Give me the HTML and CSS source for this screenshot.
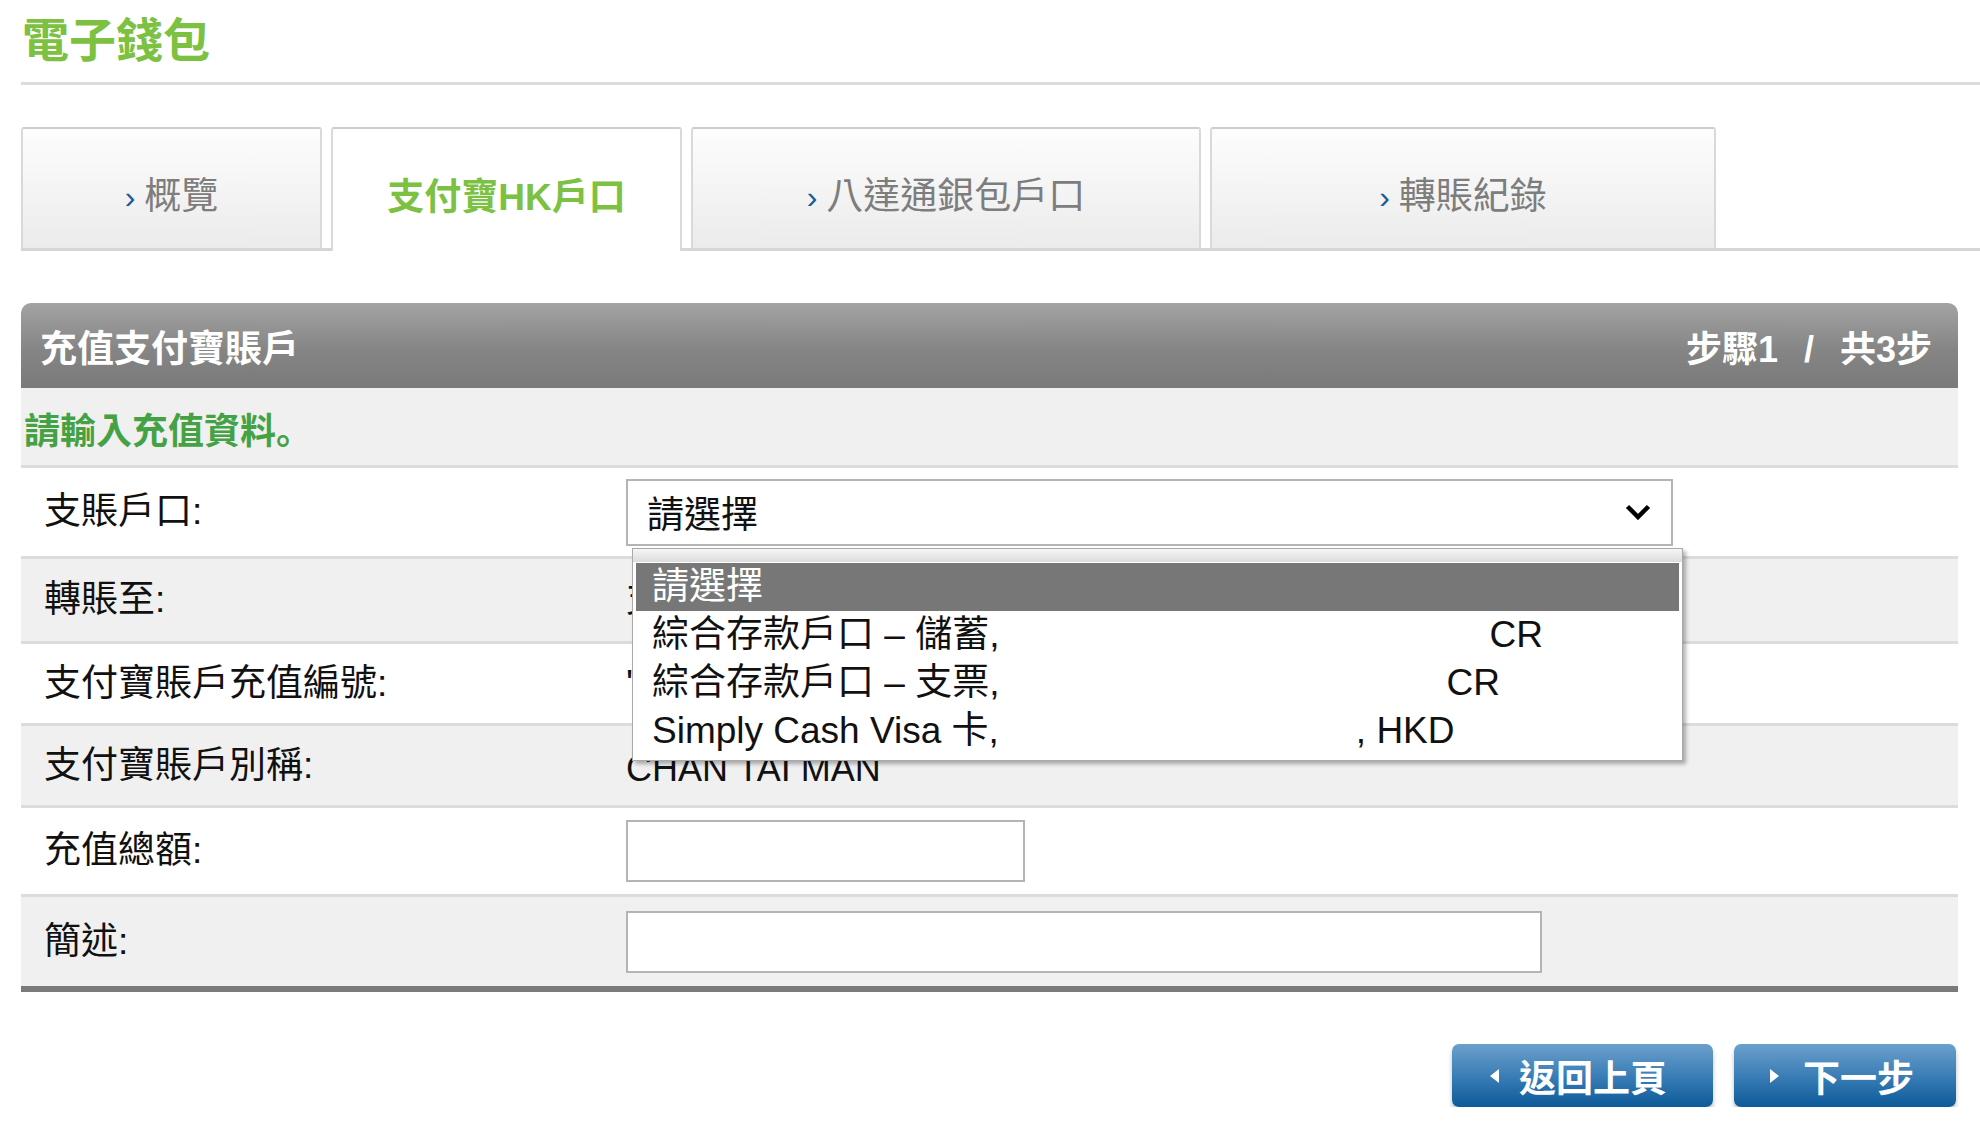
FILE: index.html
```html
<!DOCTYPE html>
<html lang="zh-Hant">
<head>
    <meta charset="UTF-8">
    <title>電子錢包</title>
    <link rel="stylesheet" href="styles.css">
</head>
<body>
    <div class="page">
        <h1 class="page-title">電子錢包</h1>

        <!-- Wallet tabs -->
        <nav class="tabs">
            <a href="#" class="tab tab-overview"><span class="tab-arrow">›</span>概覽</a>
            <a href="#" class="tab tab-alipay active">支付寶HK戶口</a>
            <a href="#" class="tab tab-octopus"><span class="tab-arrow">›</span>八達通銀包戶口</a>
            <a href="#" class="tab tab-history"><span class="tab-arrow">›</span>轉賬紀錄</a>
        </nav>

        <!-- Top up form -->
        <section class="panel">
            <div class="panel-head">
                <h2>充值支付寶賬戶</h2>
                <span class="step">步驟1 / 共3步</span>
            </div>
            <p class="panel-intro">請輸入充值資料<span class="stop" lang="zh-Hans">。</span></p>

            <div class="form-row row-account">
                <label class="form-label">支賬戶口:</label>
                <div class="select-wrap">
                    <div class="select-box">
                        <span>請選擇</span>
                        <svg class="chevron" width="26" height="16" viewBox="0 0 26 16">
                            <polyline points="2.5,2.5 13,13 23.5,2.5" fill="none" stroke="#000" stroke-width="4.5"/>
                        </svg>
                    </div>
                    <div class="select-list">
                        <div class="list-top"></div>
                        <ul>
                            <li class="selected">請選擇</li>
                            <li>綜合存款戶口 – 儲蓄,<span class="ccy gap-savings">CR</span></li>
                            <li>綜合存款戶口 – 支票,<span class="ccy gap-current">CR</span></li>
                            <li>Simply Cash Visa 卡,<span class="ccy gap-card">, HKD</span></li>
                        </ul>
                    </div>
                </div>
            </div>

            <div class="form-row row-to alt">
                <label class="form-label">轉賬至:</label>
                <span class="form-value">支付寶HK戶口</span>
            </div>

            <div class="form-row row-ref">
                <label class="form-label">支付寶賬戶充值編號:</label>
                <span class="form-value">'</span>
            </div>

            <div class="form-row row-alias alt">
                <label class="form-label">支付寶賬戶別稱:</label>
                <span class="form-value alias">CHAN TAI MAN</span>
            </div>

            <div class="form-row row-amount">
                <label class="form-label">充值總額:</label>
                <input type="text" class="text-input input-amount">
            </div>

            <div class="form-row row-desc alt">
                <label class="form-label">簡述:</label>
                <input type="text" class="text-input input-desc">
            </div>
        </section>

        <div class="actions">
            <button class="btn btn-back"><i class="arrow-left"></i>返回上頁</button>
            <button class="btn btn-next"><i class="arrow-right"></i>下一步</button>
        </div>
    </div>
</body>
</html>
```

FILE: styles.css
```css
* {
    box-sizing: border-box;
    margin: 0;
    padding: 0;
}

body {
    font-family: "Liberation Sans", "Noto Sans CJK TC", sans-serif;
    background-color: #fff;
    color: #111;
}

.page {
    padding: 10px 0 0 21px;
}

.page-title {
    font-size: 47px;
    line-height: 62px;
    font-weight: bold;
    color: #7cc142;
    padding: 0 0 10px 1px;
    border-bottom: 3px solid #dcdcdc;
}

/* Tabs */
.tabs {
    display: flex;
    gap: 9px;
    height: 124px;
    margin-top: 42px;
    border-bottom: 3px solid #d6d6d6;
}

.tab {
    display: flex;
    align-items: center;
    justify-content: center;
    padding-top: 16px;
    border: 2px solid #d9d9d9;
    border-top-color: #cdcdcd;
    border-bottom: none;
    border-radius: 3px 3px 0 0;
    background: linear-gradient(#fdfdfd, #f7f7f7 35%, #ebebeb);
    font-size: 37px;
    line-height: 50px;
    color: #7d7d7d;
    text-decoration: none;
}

.tab-arrow {
    font-size: 32px;
    color: #1d5b95;
    margin-right: 9px;
}

.tab-overview { flex: 0 0 301px; }
.tab-alipay { flex: 0 0 351px; }
.tab-octopus { flex: 0 0 510px; }
.tab-history { flex: 0 0 506px; }

.tab.active {
    margin-bottom: -3px;
    background: #fff;
    color: #7cc142;
    font-weight: bold;
}

/* Panel */
.panel {
    margin: 52px 22px 0 0;
}

.panel-head {
    display: flex;
    justify-content: space-between;
    align-items: center;
    height: 85px;
    padding: 0 26px 0 19px;
    border-radius: 10px 10px 0 0;
    background: linear-gradient(#a3a3a3, #858585 55%, #7a7a7a);
    color: #fff;
}

.panel-head h2 {
    font-size: 37px;
    font-weight: bold;
}

.step {
    font-size: 36px;
    font-weight: bold;
    word-spacing: 16px;
}

.panel-intro {
    height: 80px;
    padding: 3px 0 0 3px;
    line-height: 74px;
    background-color: #f0f0f0;
    border-bottom: 3px solid #dcdcdc;
    font-size: 36px;
    font-weight: bold;
    color: #45a244;
}

.panel-intro .stop {
    font-family: "Noto Sans CJK SC", sans-serif;
}

.form-row {
    display: grid;
    grid-template-columns: 605px 1fr;
    align-items: center;
    border-bottom: 3px solid #dcdcdc;
    background-color: #fff;
}

.form-row.alt {
    background-color: #f0f0f0;
}

.row-account { height: 91px; }
.row-to { height: 85px; }
.row-ref { height: 82px; }
.row-alias { height: 82px; }
.row-amount { height: 89px; }

.row-desc {
    height: 95px;
    border-bottom: 6px solid #7a7a7a;
}

.form-label {
    padding-left: 23px;
    font-size: 37px;
    line-height: 50px;
    color: #111;
}

.form-value {
    font-size: 37px;
    line-height: 50px;
    color: #111;
}

.alias {
    font-size: 36px;
    padding-top: 6px;
}

/* Account select and its open list */
.select-wrap {
    position: relative;
}

.select-box {
    display: flex;
    justify-content: space-between;
    align-items: center;
    width: 1047px;
    height: 67px;
    padding: 0 20px 0 19px;
    border: 2px solid #b4b4b4;
    background-color: #fff;
    font-size: 37px;
}

.select-list {
    position: absolute;
    top: 69px;
    left: 6px;
    z-index: 10;
    width: 1051px;
    padding: 0 3px 5px;
    border: 1px solid #a9a9a9;
    background-color: #fff;
    box-shadow: 3px 3px 4px rgba(0, 0, 0, 0.3);
}

.list-top {
    height: 13px;
    margin: 0 -3px 1px;
    background: linear-gradient(#f6f6f6, #dcdcdc);
}

.select-list ul {
    list-style: none;
}

.select-list li {
    height: 48px;
    padding-left: 16px;
    font-size: 37px;
    line-height: 48px;
    white-space: nowrap;
    color: #111;
}

.select-list li.selected {
    background-color: #777;
    color: #fff;
}

.gap-savings { margin-left: 490px; }
.gap-current { margin-left: 447px; }
.gap-card { margin-left: 357px; }

.text-input {
    height: 62px;
    border: 2px solid #b4b4b4;
    background-color: #fff;
    font-size: 30px;
}

.input-amount { width: 399px; }
.input-desc { width: 916px; }

/* Buttons */
.actions {
    display: flex;
    justify-content: flex-end;
    gap: 21px;
    margin-top: 52px;
    padding-right: 24px;
}

.btn {
    display: flex;
    align-items: center;
    gap: 20px;
    height: 63px;
    border: none;
    border-radius: 7px;
    background: linear-gradient(#6ba0cc, #3b7eb6 50%, #0c5a99);
    box-shadow: 0 4px 4px rgba(0, 0, 0, 0.25);
    color: #fff;
    font-family: inherit;
    font-size: 37px;
    font-weight: bold;
    cursor: pointer;
}

.btn-back {
    width: 261px;
    padding-left: 38px;
}

.btn-next {
    width: 222px;
    padding-left: 36px;
    gap: 24px;
}

.arrow-left {
    border-top: 7px solid transparent;
    border-bottom: 7px solid transparent;
    border-right: 9px solid #fff;
}

.arrow-right {
    border-top: 7px solid transparent;
    border-bottom: 7px solid transparent;
    border-left: 9px solid #fff;
}
```
